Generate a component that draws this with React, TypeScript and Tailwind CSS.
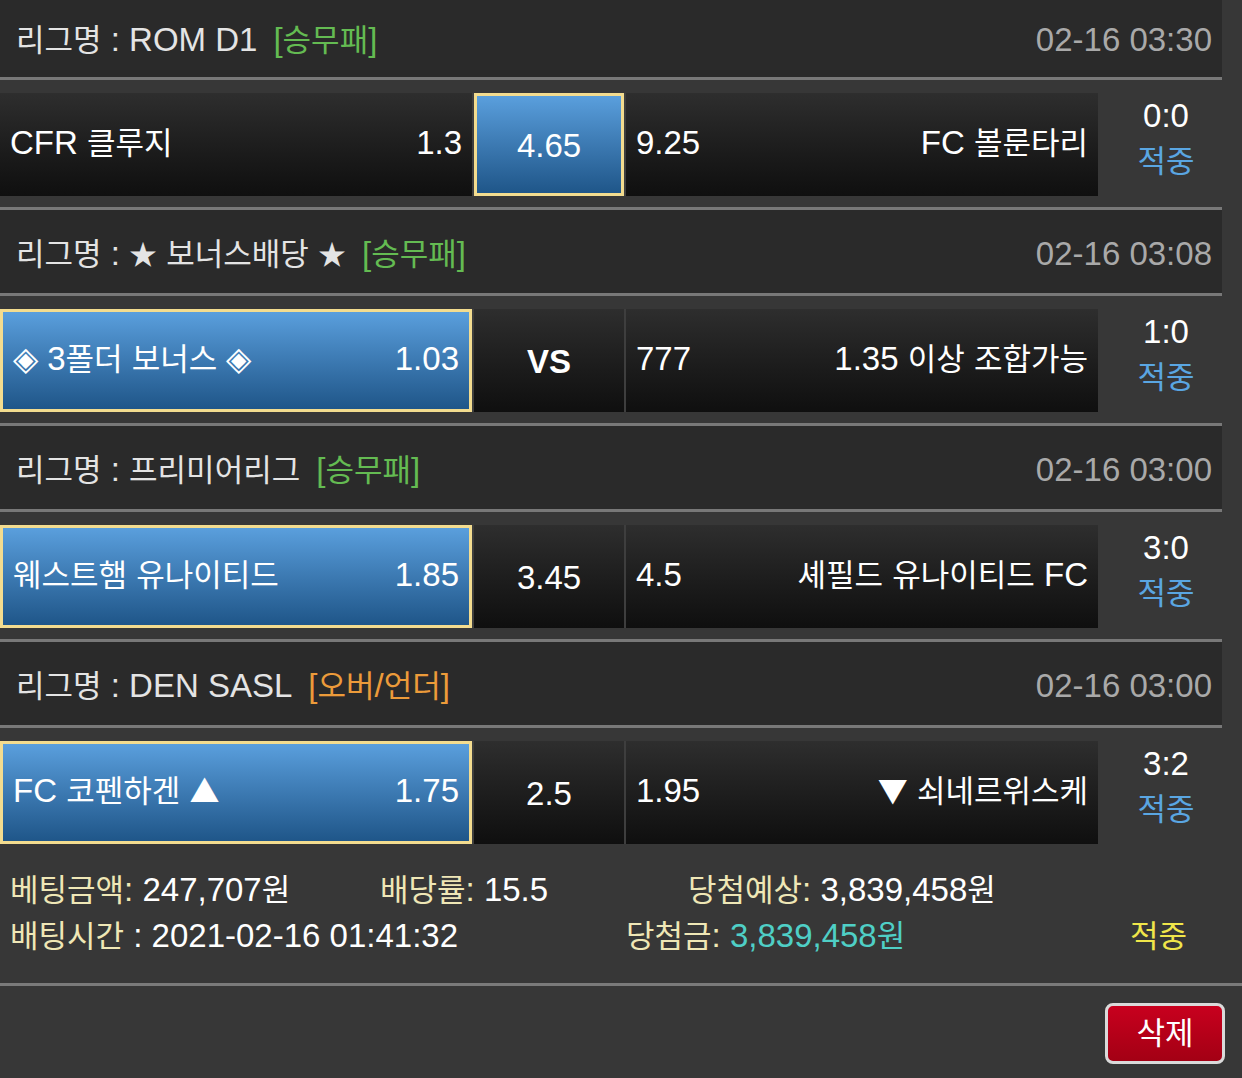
import React from "react";

type Sel = "home" | "draw" | "away";
type M = {
  league: string;
  type: string;
  typeColor: string;
  date: string;
  home: string;
  homeOdds: string;
  draw: string;
  drawBold?: boolean;
  awayOdds: string;
  away: string;
  score: string;
  sel: Sel;
};

const matches: M[] = [
  { league: "ROM D1", type: "[승무패]", typeColor: "text-[#64bb52]", date: "02-16 03:30", home: "CFR 클루지", homeOdds: "1.3", draw: "4.65", awayOdds: "9.25", away: "FC 볼룬타리", score: "0:0", sel: "draw" },
  { league: "★ 보너스배당 ★", type: "[승무패]", typeColor: "text-[#64bb52]", date: "02-16 03:08", home: "◈ 3폴더 보너스 ◈", homeOdds: "1.03", draw: "VS", drawBold: true, awayOdds: "777", away: "1.35 이상 조합가능", score: "1:0", sel: "home" },
  { league: "프리미어리그", type: "[승무패]", typeColor: "text-[#64bb52]", date: "02-16 03:00", home: "웨스트햄 유나이티드", homeOdds: "1.85", draw: "3.45", awayOdds: "4.5", away: "셰필드 유나이티드 FC", score: "3:0", sel: "home" },
  { league: "DEN SASL", type: "[오버/언더]", typeColor: "text-[#ec9b3a]", date: "02-16 03:00", home: "FC 코펜하겐 ▲", homeOdds: "1.75", draw: "2.5", awayOdds: "1.95", away: "▼ 쇠네르위스케", score: "3:2", sel: "home" },
];

function T({ s }: { s: string }) {
  const parts = s.split(/([\u3131-\u318E\uAC00-\uD7A3]+|[▲▼]|★)/);
  return (
    <>
      {parts.map((p, i) =>
        /[\u3131-\u318E\uAC00-\uD7A3]/.test(p) ? (
          <span key={i} className="text-[31px]">
            {p}
          </span>
        ) : /[▲▼]/.test(p) ? (
          <span key={i} className="font-['Noto_Sans_CJK_KR',sans-serif] text-[30px]">
            {p}
          </span>
        ) : p === "★" ? (
          <span key={i} className="font-['Noto_Sans_CJK_KR',sans-serif] text-[28px]">
            {p}
          </span>
        ) : (
          <React.Fragment key={i}>{p}</React.Fragment>
        )
      )}
    </>
  );
}

const selCls =
  "border-[3px] border-[#f3dc8f] bg-gradient-to-b from-[#5a9fdd] to-[#1f5689]";
const normCls = "bg-gradient-to-b from-[#2e2e2e] to-[#0f0f0f]";

function Header({ m, first }: { m: M; first: boolean }) {
  return (
    <div
      className={`${first ? "h-[80px] pt-[2px]" : "h-[86px] pt-[4px]"} bg-[#2a2a2a] border-b-[3px] border-[#787878] flex items-center justify-between pl-[16px] pr-[10px]`}
    >
      <div className="flex items-center text-[#e4e4e4]">
        <span>
          <T s={`리그명 : ${m.league}`} />
        </span>
        <span className={`ml-[16px] ${m.typeColor}`}>
          <T s={m.type} />
        </span>
      </div>
      <div className="text-[#a9a9a9]">{m.date}</div>
    </div>
  );
}

function Row({ m, last }: { m: M; last: boolean }) {
  return (
    <div
      className={`${last ? "h-[127px]" : "h-[130px] border-b-[3px] border-[#787878]"} bg-[#373737] pt-[13px] flex items-start`}
    >
      <div className="flex gap-[2px] h-[103px] bg-[#3e3e3e]">
        <div
          className={`w-[472px] h-full flex items-center justify-between pl-[10px] pr-[10px] pb-[4px] text-white ${m.sel === "home" ? selCls : normCls}`}
        >
          <span>
            <T s={m.home} />
          </span>
          <span>{m.homeOdds}</span>
        </div>
        <div
          className={`w-[150px] h-full flex items-center justify-center pt-[2px] text-white ${m.drawBold ? "font-bold" : ""} ${m.sel === "draw" ? selCls : normCls}`}
        >
          {m.draw}
        </div>
        <div
          className={`w-[472px] h-full flex items-center justify-between pl-[10px] pr-[10px] pb-[4px] text-white ${m.sel === "away" ? selCls : normCls}`}
        >
          <span>{m.awayOdds}</span>
          <span>
            <T s={m.away} />
          </span>
        </div>
      </div>
      <div className="w-[124px] pl-[12px] flex flex-col items-center leading-[45px]">
        <span className="text-white">{m.score}</span>
        <span className="text-[#5aa6e2]">
          <T s="적중" />
        </span>
      </div>
    </div>
  );
}

export default function App() {
  return (
    <div className="w-[1242px] h-[1078px] bg-[#373737] overflow-hidden font-['Liberation_Sans','Noto_Sans_CJK_KR',sans-serif] text-[33px] leading-none">
      <div className="w-[1222px]">
        {matches.map((m, i) => (
          <div key={i}>
            <Header m={m} first={i === 0} />
            <Row m={m} last={i === matches.length - 1} />
          </div>
        ))}
      </div>
      <div className="h-[131px] border-b-[3px] border-[#7a7a7a] pt-[12px] leading-[45px]">
        <div className="flex">
          <div className="w-[380px] pl-[10px]">
            <span className="text-[#efe7b6]">
              <T s="베팅금액:" />
            </span>
            <span className="text-white">
              {" 247,707"}
              <T s="원" />
            </span>
          </div>
          <div className="w-[308px]">
            <span className="text-[#efe7b6]">
              <T s="배당률:" />
            </span>
            <span className="text-white"> 15.5</span>
          </div>
          <div>
            <span className="text-[#efe7b6]">
              <T s="당첨예상:" />
            </span>
            <span className="text-white">
              {" 3,839,458"}
              <T s="원" />
            </span>
          </div>
        </div>
        <div className="flex">
          <div className="w-[626px] pl-[10px]">
            <span className="text-[#efe7b6]">
              <T s="배팅시간" />
            </span>
            <span className="text-white"> : 2021-02-16 01:41:32</span>
          </div>
          <div className="w-[504px]">
            <span className="text-[#efe7b6]">
              <T s="당첨금:" />
            </span>
            <span className="text-[#4fcfc6]">
              {" 3,839,458"}
              <T s="원" />
            </span>
          </div>
          <div className="text-[#f0e64a]">
            <T s="적중" />
          </div>
        </div>
      </div>
      <div className="flex justify-end pr-[17px] pt-[17px]">
        <button className="w-[120px] h-[61px] rounded-[8px] border-[3px] border-[#dadada] bg-gradient-to-b from-[#c8001e] to-[#a30014] text-white flex items-center justify-center">
          <T s="삭제" />
        </button>
      </div>
    </div>
  );
}
